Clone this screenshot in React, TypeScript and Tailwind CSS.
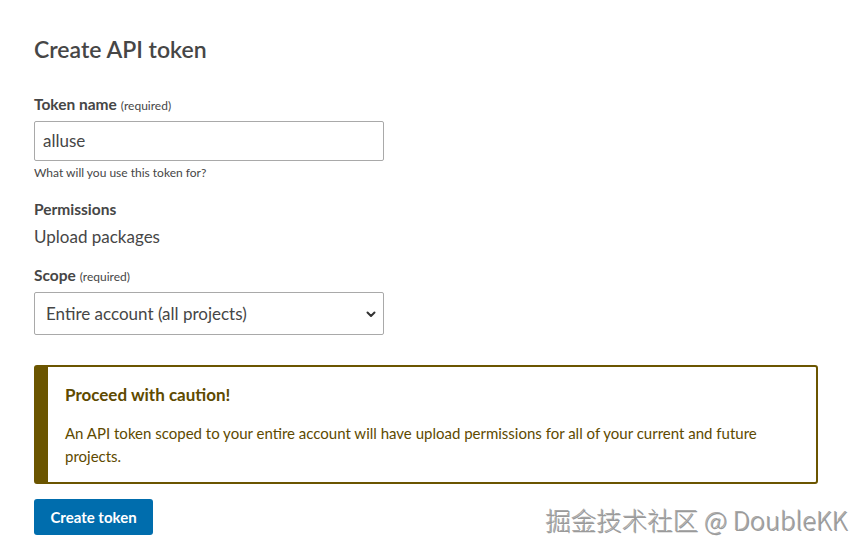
import React from "react";

export default function App() {
  return (
    <div className="w-[867px] h-[553px] bg-white relative overflow-hidden text-[#464646]" style={{ fontFamily: "Lato, 'Noto Sans', sans-serif" }}>
      <div className="pl-[34px] pr-[49px] pt-[34px]">
        <h1 className="text-[23px] leading-[30px] font-semibold">Create API token</h1>

        <div className="mt-[30px]">
          <label className="block text-[15.5px] leading-[20px]">
            <span className="font-bold">Token name</span>{" "}
            <span className="text-[12px]">(required)</span>
          </label>
          <div className="mt-[5px] w-[350px] h-[40px] border border-[#a9a9a9] rounded-[2px] flex items-center px-[8px] text-[17px]">alluse</div>
          <p className="mt-[4px] text-[12px] leading-[16px]">What will you use this token for?</p>
        </div>

        <div className="mt-[18px]">
          <div className="text-[15.5px] leading-[20px] font-bold">Permissions</div>
          <div className="mt-[7px] text-[17px] leading-[22px]">Upload packages</div>
        </div>

        <div className="mt-[17px]">
          <label className="block text-[15.5px] leading-[20px]">
            <span className="font-bold">Scope</span>{" "}
            <span className="text-[12px]">(required)</span>
          </label>
          <div className="mt-[5px] w-[350px] h-[43px] border border-[#a9a9a9] rounded-[2px] flex items-center justify-between pl-[11px] pr-[6px] text-[17px]">
            <span>Entire account (all projects)</span>
            <svg width="12" height="12" viewBox="0 0 12 12" fill="none" stroke="#333" strokeWidth="2" strokeLinecap="round" strokeLinejoin="round">
              <path d="M2.5 4.5 6 8l3.5-3.5" />
            </svg>
          </div>
        </div>

        <div className="mt-[30px] w-[784px] h-[119px] border-2 border-l-[14px] border-[#6b5500] rounded-[3px] pl-[17px] pr-[20px] pt-[16px] text-[#5e4a00]">
          <div className="text-[17px] leading-[24px] font-bold">Proceed with caution!</div>
          <p className="mt-[15px] text-[15px] leading-[23px]">
            An API token scoped to your entire account will have upload permissions for all of your current and future projects.
          </p>
        </div>

        <button className="mt-[15px] w-[119px] h-[36px] bg-[#006dad] rounded-[3px] text-white text-[15px] font-bold">Create token</button>
      </div>

      <div
        className="absolute left-[546px] top-[503px] text-[25.5px] leading-[34px] text-[#9a9a9a]"
        style={{ fontFamily: "'Noto Sans CJK SC', 'Noto Sans', sans-serif", fontWeight: 300, textShadow: "1px 1px 0 #fff, -1px -1px 0 #aaa" }}
      >
        掘金技术社区 @ DoubleKK
      </div>
    </div>
  );
}
